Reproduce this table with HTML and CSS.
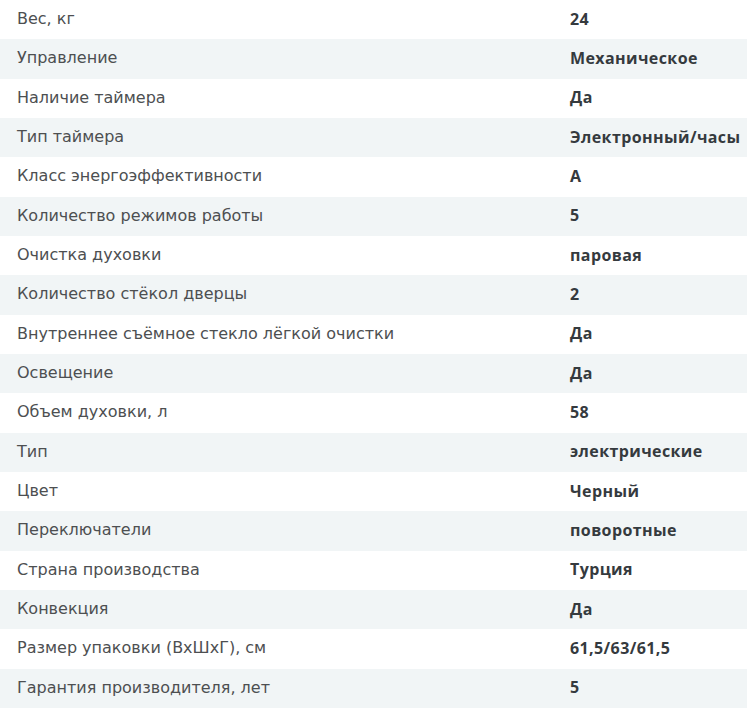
FILE: index.html
```html
<!DOCTYPE html>
<html lang="ru">
<head>
<meta charset="utf-8">
<link rel="stylesheet" href="styles.css">
</head>
<body>
<div class="specs">
  <div class="row"><span class="label">Вес, кг</span><span class="value">24</span></div>
  <div class="row"><span class="label">Управление</span><span class="value">Механическое</span></div>
  <div class="row"><span class="label">Наличие таймера</span><span class="value">Да</span></div>
  <div class="row"><span class="label">Тип таймера</span><span class="value">Электронный/часы</span></div>
  <div class="row"><span class="label">Класс энергоэффективности</span><span class="value">A</span></div>
  <div class="row"><span class="label">Количество режимов работы</span><span class="value">5</span></div>
  <div class="row"><span class="label">Очистка духовки</span><span class="value">паровая</span></div>
  <div class="row"><span class="label">Количество стёкол дверцы</span><span class="value">2</span></div>
  <div class="row"><span class="label">Внутреннее съёмное стекло лёгкой очистки</span><span class="value">Да</span></div>
  <div class="row"><span class="label">Освещение</span><span class="value">Да</span></div>
  <div class="row"><span class="label">Объем духовки, л</span><span class="value">58</span></div>
  <div class="row"><span class="label">Тип</span><span class="value">электрические</span></div>
  <div class="row"><span class="label">Цвет</span><span class="value">Черный</span></div>
  <div class="row"><span class="label">Переключатели</span><span class="value">поворотные</span></div>
  <div class="row"><span class="label">Страна производства</span><span class="value">Турция</span></div>
  <div class="row"><span class="label">Конвекция</span><span class="value">Да</span></div>
  <div class="row"><span class="label">Размер упаковки (ВхШхГ), см</span><span class="value">61,5/63/61,5</span></div>
  <div class="row"><span class="label">Гарантия производителя, лет</span><span class="value">5</span></div>
</div>
</body>
</html>
```

FILE: styles.css
```css
html, body {
  margin: 0;
  padding: 0;
  background: #ffffff;
}
.specs {
  width: 747px;
}
.row {
  display: grid;
  grid-template-columns: 553px 1fr;
  align-items: center;
  height: 39.33px;
  padding-left: 17px;
  padding-bottom: 2px;
  box-sizing: border-box;
}
.row:nth-child(even) {
  background: #f1f5f6;
}
.label {
  font-family: "DejaVu Sans", sans-serif;
  font-size: 16px;
  color: #4d4f51;
  white-space: nowrap;
}
.value {
  font-family: "Open Sans", sans-serif;
  font-weight: 700;
  font-size: 16px;
  letter-spacing: 0.4px;
  color: #353a3e;
  white-space: nowrap;
}
```
